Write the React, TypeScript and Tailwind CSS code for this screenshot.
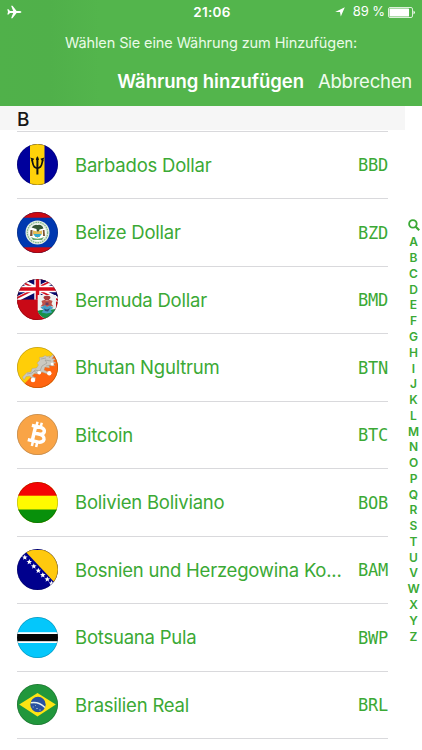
import type { ReactNode } from 'react';

function Flag({ id, children, rim = '#00000055' }: { id: string; children: ReactNode; rim?: string }) {
  return (
    <svg width="41" height="41" viewBox="0 0 41 41" className="shrink-0">
      <clipPath id={id}>
        <circle cx="20.5" cy="20.5" r="20.5" />
      </clipPath>
      <g clipPath={`url(#${id})`}>{children}</g>
      <circle cx="20.5" cy="20.5" r="20.2" fill="none" stroke={rim} strokeWidth="0.6" />
    </svg>
  );
}

const Barbados = () => (
  <Flag id="bbd">
    <rect width="41" height="41" fill="#00009c" />
    <rect x="13" width="14.5" height="41" fill="#ffd20a" />
    <g fill="none" stroke="#111" strokeWidth="1.7">
      <path d="M20.4 13.5V30.5" strokeWidth="2" />
      <path d="M14.8 15.5C16.3 18.5 15 24.2 20.4 24.2C25.8 24.2 24.5 18.5 26 15.5" />
    </g>
    <path d="M20.4 12L22 16H18.8ZM13.2 13.5L17.2 14.8L15.3 17.5ZM27.4 13.5L23.4 14.8L25.5 17.5Z" fill="#111" />
  </Flag>
);

const Belize = () => (
  <Flag id="bzd">
    <rect width="41" height="41" fill="#0038b0" />
    <rect width="41" height="5.7" fill="#cc0a14" />
    <rect y="35.3" width="41" height="5.7" fill="#cc0a14" />
    <circle cx="20.5" cy="20.5" r="12" fill="#e6eee3" />
    <circle cx="20.5" cy="20.5" r="10.2" fill="none" stroke="#7fb68a" strokeWidth="1.2" strokeDasharray="1.6 .8" />
    <circle cx="20.5" cy="20.5" r="8.4" fill="#fff" />
    <path d="M14.5 15.5Q17 12 20.5 13Q25 12 26.5 16.5L22.5 17.5L21.5 21H20L19.5 17Z" fill="#345635" />
    <path d="M16 18.5L20.5 19.5L25 18.5V22L20.5 26L16 22Z" fill="#e3bd55" />
    <path d="M16.5 22H24.5L22.5 25H18.5Z" fill="#30a9cf" />
    <path d="M13.5 18H15.5V24H13ZM25.8 18H27.5L28 24H26Z" fill="#7a5636" />
    <path d="M14 25Q20.5 28.5 27 25L25 28H16Z" fill="#68a66b" />
  </Flag>
);

const Bermuda = () => (
  <Flag id="bmd">
    <rect width="41" height="41" fill="#c90916" />
    <rect width="41" height="20.7" fill="#080869" />
    <path d="M-6 -3L46 23M46 -3L-6 23" stroke="#fff" strokeWidth="5" />
    <path d="M-5 -2L45 23M46 -4L-6 22" stroke="#d21122" strokeWidth="1.7" />
    <path d="M20.5 0V20.7M0 10H41" stroke="#fff" strokeWidth="6.4" />
    <path d="M20.5 0V20.7M0 10H41" stroke="#d60919" strokeWidth="3.5" />
    <path d="M0 20.7H20.7V41H0Z" fill="#c90916" />
    <path d="M20.7 16H39V30Q37 39 29.5 40Q22 38 20.7 31Z" fill="#eef1ef" />
    <path d="M20.5 32Q25 30 29.5 32Q34 30 39 30Q36 38 29.5 40Q23 38 20.5 32Z" fill="#16924a" />
    <path d="M26.5 19Q26.5 16.5 30 16.8Q33.5 16.5 33.5 19L31.8 21H28.2Z" fill="#a8373a" />
    <path d="M24.5 22Q27 20.5 30 21.5Q33 20.5 35.5 22L34.5 25L36.5 27.5L33 27L30 28L27 27L23.5 27.5L25.5 25Z" fill="#bf5149" />
    <path d="M23.5 28.5L28 26L30 28L33 26.5L36.5 29L33.5 30.5L35 33.5L29.5 34.5L24.5 33.5L26.5 31Z" fill="#459fc6" />
    <path d="M27 29.5L30 30.5L33 29.3L31 32.5L28 32Z" fill="#294c78" />
    <path d="M28.5 23.5H31.5V26H28.5Z" fill="#663c62" />
  </Flag>
);

const Bhutan = () => (
  <Flag id="btn">
    <rect width="41" height="41" fill="#ffce08" />
    <path d="M41 3V41H3Z" fill="#ff6510" />
    <path d="M5.5 30L10 25.5L14 25L15 21.5L19.5 21L21.5 18L20 16L23 13L22.5 10.5L26 10L28 8.5L30 9.5L33 9L32 11L36 7.5L37 9L35 11.5L38.5 12L36 14L39 16L34.5 16.5L38 19L32 18.5L32.5 21L28 20L27 23L31 25L30.5 27L25 25L22 27L17 26.5L15 29L19 31L17 33L12.5 29L9 29.5L7 33Z" fill="#cbc9c1" stroke="#a99e86" strokeWidth=".4" />
    <path d="M10 27L15 26L18 23L23 24L25 19L30 16L28 13L34 14M24 12L29 11M29 19L35 18M17 24L20 26" fill="none" stroke="#999991" strokeWidth=".6" />
    <g fill="#fff">
      <circle cx="16" cy="33" r="2.3" />
      <circle cx="22.3" cy="25.8" r="1.8" />
      <circle cx="32.3" cy="26.2" r="2.2" />
      <circle cx="35.2" cy="17" r="1.6" />
    </g>
  </Flag>
);

const Bitcoin = () => (
  <Flag id="btc" rim="#7b654c99">
    <rect width="41" height="41" fill="#f9a446" />
    <g transform="rotate(13 20.5 20.5)" fill="none" stroke="#fff">
      <path d="M13 12.9H21.5C28.3 12.9 28 19.8 21.5 19.8H16.8M21.5 19.8C30 19.8 30 27.7 22 27.7H12.2M16.8 13V27.5" strokeWidth="3.5" />
      <path d="M17.6 8V12.5M22 8V12.5M17.6 28V33M22 28V33" strokeWidth="2.5" />
    </g>
  </Flag>
);

const Bolivia = () => (
  <Flag id="bob">
    <rect width="41" height="41" fill="#fffa00" />
    <rect width="41" height="13.7" fill="#f40404" />
    <rect y="27.5" width="41" height="14" fill="#08900b" />
  </Flag>
);

const starPositions = [[3, 3], [7.8, 8.3], [12.3, 12.8], [16.8, 17.2], [21.3, 21.6], [25.8, 26], [30.3, 30.2], [34.6, 34.4]];

const Bosnia = () => (
  <Flag id="bam">
    <rect width="41" height="41" fill="#00008d" />
    <path d="M7 1H42V35.5H39.5Z" fill="#ffc90e" />
    {starPositions.map(([x, y]) => (
      <path key={x} transform={`translate(${x} ${y})`} d="M0 -2.8L.8 -.9L2.8 -.8L1.2 .5L1.7 2.5L0 1.4L-1.7 2.5L-1.2 .5L-2.8 -.8L-.8 -.9Z" fill="#fff" />
    ))}
  </Flag>
);

const Botswana = () => (
  <Flag id="bwp">
    <rect width="41" height="41" fill="#04c7fb" />
    <rect y="15.2" width="41" height="10.8" fill="#fff" />
    <rect y="17" width="41" height="7.2" fill="#050505" />
  </Flag>
);

const Brazil = () => (
  <Flag id="brl">
    <rect width="41" height="41" fill="#21973c" />
    <path d="M2.2 20.5L20.5 9L38.8 20.5L20.5 32.5Z" fill="#fee414" />
    <circle cx="21" cy="20.5" r="7.7" fill="#2952a0" />
    <path d="M14 18.7Q22 17.4 28 23.5" fill="none" stroke="#e7f2ef" strokeWidth="1.5" />
    <path d="M15.5 23H17M19 24.5H21M22 26H24M18 21.5H19" stroke="#a9bed3" strokeWidth=".7" />
  </Flag>
);

const currencies = [
  { name: 'Barbados Dollar', code: 'BBD', icon: <Barbados /> },
  { name: 'Belize Dollar', code: 'BZD', icon: <Belize /> },
  { name: 'Bermuda Dollar', code: 'BMD', icon: <Bermuda /> },
  { name: 'Bhutan Ngultrum', code: 'BTN', icon: <Bhutan /> },
  { name: 'Bitcoin', code: 'BTC', icon: <Bitcoin /> },
  { name: 'Bolivien Boliviano', code: 'BOB', icon: <Bolivia /> },
  { name: 'Bosnien und Herzegowina Ko...', code: 'BAM', icon: <Bosnia /> },
  { name: 'Botsuana Pula', code: 'BWP', icon: <Botswana /> },
  { name: 'Brasilien Real', code: 'BRL', icon: <Brazil /> },
];

function StatusBar() {
  return (
    <div className="grid h-6 grid-cols-3 items-center pr-[7px] pl-[7px]">
      <svg width="15" height="14" viewBox="0 0 15 14" fill="#fff">
        <path d="M14.5 6.9Q14.3 6 12.5 6H9.6L5.5.7H4.1L6.2 6H3L1.5 4.2H.3L1 6.9L.3 9.6H1.5L3 7.9H6.2L4.1 13.2H5.5L9.6 7.9H12.5Q14.3 7.9 14.5 6.9Z" />
      </svg>
      <span className="pl-[2px] text-center text-[13.5px] font-semibold tracking-[0.35px]">21:06</span>
      <div className="flex items-center justify-end">
        <svg width="10" height="10" viewBox="0 0 10 10" className="mr-[8px]">
          <path d="M9.8.2L5.8 9.5L5 5H.2Z" fill="#fff" />
        </svg>
        <span className="mr-[3px] text-[13px] tracking-[-0.1px] whitespace-nowrap">89 %</span>
        <svg width="27" height="11" viewBox="0 0 27 11">
          <rect x=".5" y=".5" width="24" height="10" rx="1.5" fill="none" stroke="#fff" strokeWidth=".8" />
          <rect x="1.5" y="1.5" width="19.5" height="8" rx=".5" fill="#fff" />
          <path d="M25.5 3.5Q28.3 5.5 25.5 7.5Z" fill="#fff" />
        </svg>
      </div>
    </div>
  );
}

export default function App() {
  return (
    <div className="flex h-[750px] w-[422px] flex-col overflow-hidden bg-white font-['Inter','Liberation_Sans',sans-serif]">
      <header className="h-[106px] shrink-0 bg-[#53b54c] bg-[linear-gradient(to_right,#50b14a_0px,#50b04a_50px,#53b54c_100px)] text-white">
        <StatusBar />
        <p className="mt-[8px] text-center text-[14.5px] leading-[22px] tracking-[-0.1px] text-[#eafbe7]">Wählen Sie eine Währung zum Hinzufügen:</p>
        <div className="mt-[13px] flex justify-end gap-[14px] pr-[10px] text-[18.5px] leading-[28px] whitespace-nowrap">
          <b className="font-semibold tracking-[-0.06px]">Währung hinzufügen</b>
          <span className="tracking-[-0.22px] text-[#f0fced]">Abbrechen</span>
        </div>
      </header>
      <div className="flex min-h-0 flex-1">
        <main className="w-[405px] shrink-0">
          <h2 className="h-[24px] bg-[#f6f6f6] pl-[17px] text-[19px] leading-[27px] font-medium text-[#171717]">B</h2>
          <div className="mr-[17px] ml-[17px] h-[2px] border-b border-[#d9d9dc]" />
          <ul className="-mt-[0.4px] mr-[17px] ml-[17px]">
            {currencies.map((c) => (
              <li key={c.code} className="flex h-[67.5px] items-center border-b border-[#d9d9dc] text-[#3ba935]">
                {c.icon}
                <span className="ml-[17px] flex-1 pt-[2px] text-[18.5px] tracking-[-0.22px] whitespace-nowrap">{c.name}</span>
                <span className="pt-[2px] font-['DejaVu_Sans_Mono',monospace] text-[17px] tracking-[-0.2px]">{c.code}</span>
              </li>
            ))}
          </ul>
        </main>
        <nav className="flex w-[17px] flex-col items-center pt-[111px] text-[12px] font-semibold text-[#3ba935]">
          <svg width="12" height="12" viewBox="0 0 12 12" fill="none" stroke="currentColor" className="mt-[2px] mb-[3.4px] shrink-0">
            <circle cx="4.9" cy="4.9" r="3.8" strokeWidth="1.8" />
            <path d="M7.7 7.7L11.2 11.2" strokeWidth="2.2" />
          </svg>
          {'ABCDEFGHIJKLMNOPQRSTUVWXYZ'.split('').map((l) => (
            <span key={l} className="h-[15.77px] shrink-0 leading-[15.77px]">{l}</span>
          ))}
        </nav>
      </div>
    </div>
  );
}
